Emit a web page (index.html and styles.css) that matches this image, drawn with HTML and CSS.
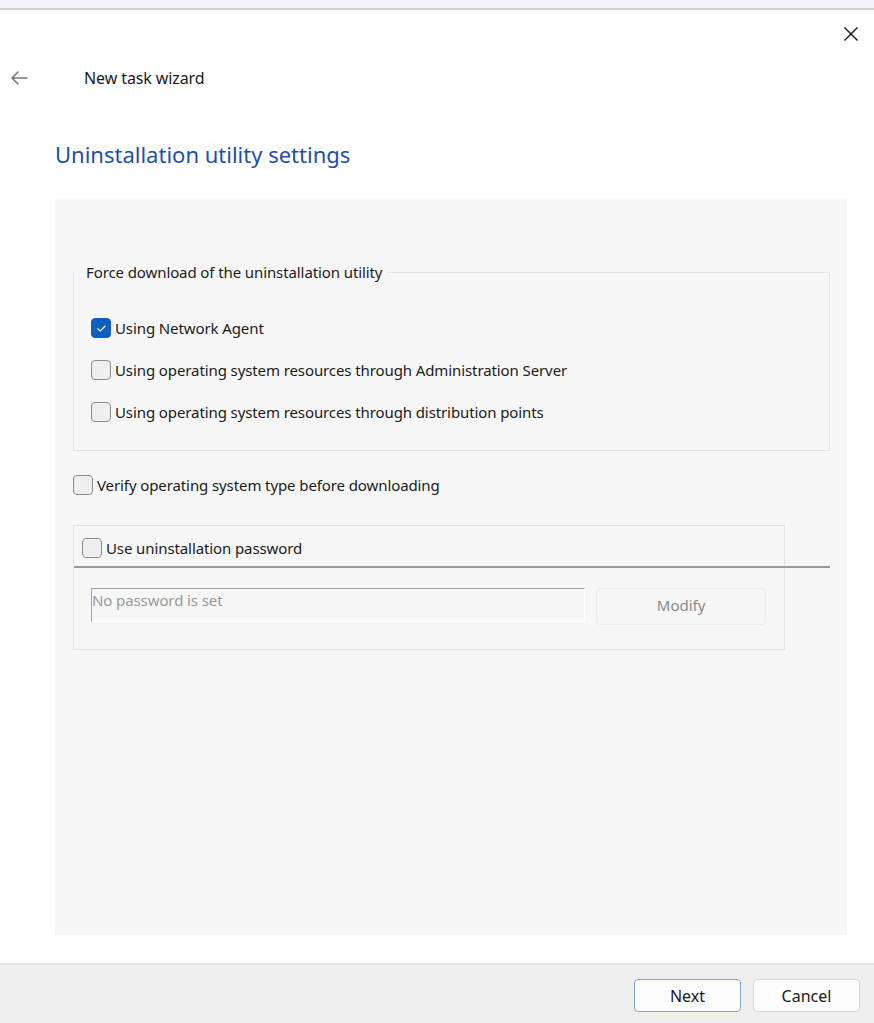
FILE: index.html
```html
<!DOCTYPE html>
<html lang="en">
<head>
<meta charset="utf-8">
<title>New task wizard</title>
<link rel="stylesheet" href="styles.css">
</head>
<body>
<div class="page">
  <div class="topbar"></div>
  <div class="close-row">
    <svg class="close" width="16" height="16" viewBox="0 0 16 16"><path d="M1.5 1.5 L14.5 14.5 M14.5 1.5 L1.5 14.5" stroke="#111" stroke-width="1.4" fill="none"/></svg>
  </div>
  <div class="head-row">
    <svg class="back" width="20" height="16" viewBox="0 0 20 16"><path d="M18 8 H3 M9 2 L3 8 L9 14" stroke="#777" stroke-width="1.6" fill="none" stroke-linecap="round" stroke-linejoin="round"/></svg>
    <span class="wizard-title">New task wizard</span>
  </div>
  <h1 class="page-title">Uninstallation utility settings</h1>
  <div class="panel">
    <fieldset class="group">
      <legend class="group-legend">Force download of the uninstallation utility</legend>
      <label class="check-row"><span class="cb checked"><svg width="11" height="9" viewBox="0 0 11 9"><path d="M1.5 4.5 L4.2 7 L9.5 1.8" stroke="#fff" stroke-width="1.2" fill="none"/></svg></span>Using Network Agent</label>
      <label class="check-row"><span class="cb"></span>Using operating system resources through Administration Server</label>
      <label class="check-row"><span class="cb"></span>Using operating system resources through distribution points</label>
    </fieldset>
    <label class="check-row verify"><span class="cb"></span>Verify operating system type before downloading</label>
    <div class="pw-box">
      <div class="pw-head">
        <label class="check-row pw-check"><span class="cb"></span>Use uninstallation password</label>
      </div>
      <div class="pw-body">
        <div class="pw-input">No password is set</div>
        <div class="btn-modify">Modify</div>
      </div>
    </div>
  </div>
  <div class="footer">
    <div class="btn btn-primary">Next</div>
    <div class="btn">Cancel</div>
  </div>
</div>
</body>
</html>
```

FILE: styles.css
```css
* { box-sizing: border-box; }
html, body { margin: 0; padding: 0; background: #fff; }
body { font-family: "Noto Sans", "Open Sans", sans-serif; color: #1a1a1a; }
.page { height: 1023px; display: flex; flex-direction: column; }
.topbar { height: 10px; background: #f2f3f8; border-bottom: 2px solid #cfcfd4; }
.close-row { height: 44px; display: flex; justify-content: flex-end; align-items: center; padding-right: 15px; padding-top: 4px; }
.close { display: block; }
.head-row { height: 48px; display: flex; align-items: center; }
.back { margin-left: 9px; display: block; }
.wizard-title { margin-left: 55px; font-size: 16px; letter-spacing: -0.1px; color: #1a1a1a; }
.page-title { margin: 36px 0 0 55px; font-weight: 400; font-size: 22px; color: #1f4fa8; height: 32px; line-height: 32px; }
.panel { margin: 29px 27px 28px 55px; background: #f7f7f7; flex: 1; padding: 63px 17px 0 18px; }
.group { margin: 0; border: 1px solid #e3e3e3; padding: 25px 0 17px 17px; }
.group-legend { font-size: 15px; padding: 0 5px 0 12px; margin-left: -17px; letter-spacing: -0.1px; line-height: 20px; }
.check-row { display: flex; align-items: center; font-size: 15px; height: 42px; letter-spacing: -0.1px; color: #1a1a1a; }
.cb { width: 20px; height: 20px; border: 1px solid #8d8d8d; border-radius: 4px; background: #efefef; margin-right: 4px; display: flex; align-items: center; justify-content: center; flex: none; }
.cb.checked { background: #0f5fc1; border-color: #0f5fc1; }
.verify { margin-top: 13px; height: 42px; }
.pw-box { width: 712px; margin-top: 19px; border: 1px solid #e3e3e3; height: 125px; }
.pw-head { margin-right: -46px; border-bottom: 2px solid #9a9a9a; height: 42px; padding-left: 8px; padding-top: 4px; }
.pw-check { height: 36px; }
.pw-body { display: flex; padding: 20px 18px 0 17px; gap: 11px; }
.pw-input { width: 495px; height: 34px; border-top: 1px solid #a0a0a0; border-left: 1px solid #a0a0a0; border-right: 1px solid #fff; border-bottom: 1px solid #fff; font-size: 15px; color: #9a9a9a; padding: 1px 0 0 0; line-height: 20px; letter-spacing: -0.1px; }
.btn-modify { width: 170px; height: 37px; border: 1px solid #ececec; border-radius: 4px; display: flex; align-items: center; justify-content: center; font-size: 15px; color: #8a8a8a; padding-bottom: 3px; }
.footer { height: 60px; background: #efefef; border-top: 2px solid #e6e6e6; display: flex; justify-content: flex-end; align-items: flex-start; padding: 14px 14px 0 0; gap: 12px; }
.btn { width: 107px; height: 33px; border: 1px solid #d6d6d6; border-radius: 4px; background: #fdfdfd; display: flex; align-items: center; justify-content: center; font-size: 16px; color: #1a1a1a; }
.btn-primary { border-color: #7aa7da; }
```
